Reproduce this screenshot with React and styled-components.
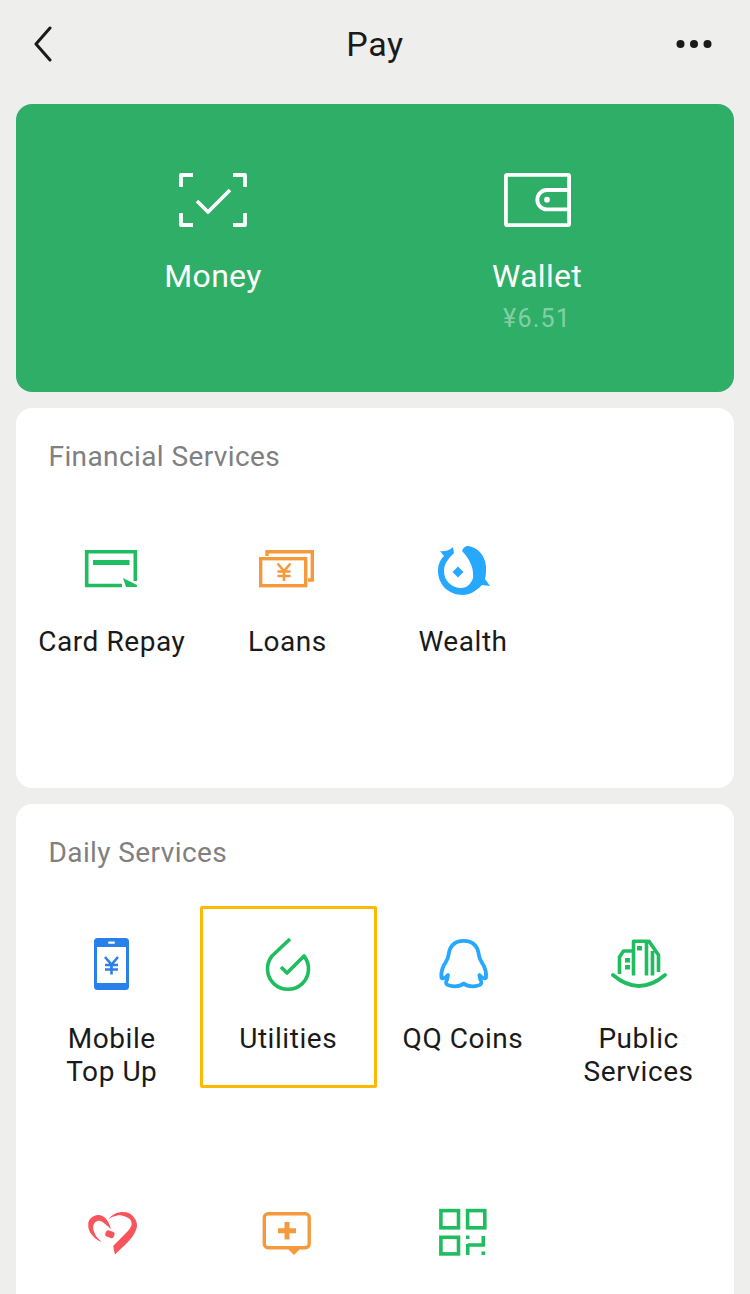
import React from "react";
import styled, { createGlobalStyle } from "styled-components";

const Global = createGlobalStyle`
  html, body { margin: 0; padding: 0; background: #eeeeed; }
  #root { width: 750px; height: 1294px; overflow: hidden; }
  * { box-sizing: border-box; }
`;

const Page = styled.div`
  width: 750px;
  height: 1294px;
  overflow: hidden;
  background: #eeeeed;
  font-family: "Roboto", "Liberation Sans", sans-serif;
  color: #1a1a1a;
`;
const Header = styled.header`
  height: 88px;
  display: grid;
  grid-template-columns: 1fr auto 1fr;
  align-items: center;
  padding: 0 33px;
`;
const HeaderSlot = styled.div`
  display: flex;
  justify-content: ${(p) => p.$end ? "flex-end" : "flex-start"};
  padding-right: ${(p) => p.$end ? "5px" : "0"};
`;
const Title = styled.h1`
  margin: 0;
  font-size: 34px;
  font-weight: 400;
  letter-spacing: 0.6px;
`;
const Content = styled.main`
  padding: 16px 16px 0;
  display: flex;
  flex-direction: column;
  gap: 16px;
`;
const Hero = styled.section`
  height: 288px;
  border-radius: 16px;
  background: #2fae67;
  padding: 68px 35px 0;
  display: grid;
  grid-template-columns: 324px 324px;
  align-items: start;
`;
const HeroItem = styled.div`
  display: flex;
  flex-direction: column;
  align-items: center;
  color: #fff;
`;
const HeroLabel = styled.div`
  margin-top: 30px;
  font-size: 32px;
  line-height: 36px;
  letter-spacing: 0.3px;
`;
const HeroSub = styled.div`
  margin-top: 10px;
  font-size: 25px;
  line-height: 30px;
  letter-spacing: 1.2px;
  color: rgba(255, 255, 255, 0.42);
`;
const Card = styled.section`
  border-radius: 16px;
  background: #fff;
  padding: 33px 8px 12px;
`;
const CardTitle = styled.h2`
  margin: 0 0 ${(p) => p.$gap}px 24.5px;
  font-size: 28px;
  line-height: 32px;
  font-weight: 400;
  color: #808080;
  letter-spacing: 0.4px;
`;
const Grid = styled.div`
  display: grid;
  grid-template-columns: repeat(4, 175.6px);
  grid-auto-rows: 267px;
`;
const Cell = styled.div`
  height: 182px;
  padding-top: 31px;
  display: flex;
  flex-direction: column;
  align-items: center;
  margin-right: ${(p) => p.$selected ? "-1.6px" : "0"};
  box-shadow: ${(p) => p.$selected ? "inset 0 0 0 3px #ffb900" : "none"};
  border-radius: 2px;
`;
const CellLabel = styled.div`
  margin-top: 29px;
  font-size: 28px;
  line-height: 33px;
  text-align: center;
  white-space: pre-line;
  letter-spacing: 0.55px;
`;
const Svg = styled.svg`
  display: block;
  flex: none;
`;

const Back = () => (
  <Svg width="20" height="36" viewBox="0 0 20 36" fill="none" stroke="#1a1a1a" strokeWidth="3" strokeLinecap="round" strokeLinejoin="round">
    <path d="M17 2 L3 18 L17 34" />
  </Svg>
);
const More = () => (
  <Svg width="36" height="10" viewBox="0 0 36 10" fill="#1a1a1a">
    <circle cx="4.5" cy="5" r="4" /><circle cx="18" cy="5" r="4" /><circle cx="31.5" cy="5" r="4" />
  </Svg>
);
const MoneyIcon = () => (
  <Svg width="70" height="56" viewBox="0 0 70 56" fill="none" stroke="#fff" strokeWidth="3.8" strokeLinejoin="round">
    <path d="M15 3 H3 V15 M55 3 H67 V15 M3 41 V53 H15 M67 41 V53 H55" />
    <path d="M19 29 L30 40 L52 18" strokeWidth="3.6" />
  </Svg>
);
const WalletIcon = () => (
  <Svg width="70" height="56" viewBox="0 0 70 56" fill="none" stroke="#fff" strokeWidth="3.8" strokeLinejoin="round">
    <rect x="3.9" y="2.9" width="63.2" height="50.2" rx="1" />
    <path d="M67 18 H45 A9.7 9.7 0 0 0 45 37.4 H67" />
    <circle cx="45" cy="27.7" r="2.9" fill="#fff" stroke="none" />
  </Svg>
);

const I = ({ children, fill = "none", stroke = "none", w = 3 }) => (
  <Svg width="56" height="56" viewBox="0 0 56 56" fill={fill} stroke={stroke} strokeWidth={w}>{children}</Svg>
);
const GREEN = "#1fbd5f", ORANGE = "#f59a3c", BLUE = "#26a8ff", DEEP = "#2a80ea", RED = "#f7555b";

const Yen = ({ x, y, color }) => (
  <g transform={`translate(${x} ${y})`} fill="none" stroke={color} strokeWidth="2.6">
    <path d="M-6.5 -8.5 L0 -1 L6.5 -8.5 M-6.5 -0.5 H6.5 M-6.5 4 H6.5 M0 -1 V9" />
  </g>
);

const CardIcon = () => (
  <I>
    <path d="M38 45.5 H2.7 V11.7 H51.3 V41" fill="none" stroke={GREEN} strokeWidth="3.6" />
    <rect x="9" y="20" width="36.5" height="5" fill={GREEN} />
    <path d="M39 38 L53 45 V47 H42 Z" fill={GREEN} />
  </I>
);
const LoansIcon = () => (
  <I stroke={ORANGE} w={3.4}>
    <path d="M8 16 V11.7 H53.3 V40 H49" />
    <rect x="1.7" y="18.7" width="45" height="27" />
    <Yen x={25} y={32} color={ORANGE} />
  </I>
);
const WealthIcon = () => (
  <I>
    <path fill={BLUE} d="M5 11 C9 12 14 11 18 7 L19 13 C13 19 9 24 9 31 C9 41 17 48 26 48 C32 48 36 44 38 38 C39 30 36 20 27 11 C28 8 30 6 33 6 C42 7 50 15 51 26 C51 32 51 36 50 39 L55 46 L47 45 C41 51 35 55 28 55 C13 55 3 44 3 31 C3 24 5 20 9 16 Z" />
    <path fill={BLUE} d="M23 26.5 L28.5 32 L23 37.5 L17.5 32 Z" />
  </I>
);
const MobileIcon = () => (
  <I>
    <rect x="10" y="1" width="35" height="52" rx="3.5" fill={DEEP} />
    <rect x="13" y="10" width="29" height="36" fill="#fff" />
    <rect x="24" y="4.4" width="7" height="2.4" rx="1.2" fill="#fff" />
    <Yen x={27.5} y={28.5} color={DEEP} />
  </I>
);
const UtilitiesIcon = () => (
  <I stroke={GREEN} w={3.6}>
    <path d="M30 2 L12 19 A20.5 20.5 0 1 0 44 19 L27 36 L21 30" strokeLinejoin="round" />
  </I>
);
const QQIcon = () => (
  <I stroke={BLUE} w={3.8}>
    <path strokeLinejoin="round" d="M28.7 3.8 C19 3.8 14.5 10 13.5 18 C13 23 10.5 25 8.5 29 C6.5 33 6 37 6.5 41 C8 42 11 40 13 38 L12 43 C10 45 11 48 14 48.5 C20 50 25 49.5 28.7 46.5 C32.4 49.5 37.4 50 43.4 48.5 C46.4 48 47.4 45 45.4 43 L44.4 38 C46.4 40 49.4 42 50.9 41 C51.4 37 50.9 33 48.9 29 C46.9 25 44.4 23 43.9 18 C42.9 10 38.4 3.8 28.7 3.8 Z" />
  </I>
);
const PublicIcon = () => (
  <I stroke={GREEN} w={3.6}>
    <path d="M2 38 Q28 60 54 38" strokeWidth="3.8" strokeLinecap="round" />
    <path d="M8.5 37 V20 L12.5 14 H22.5 M22.5 38.5 V4.2 H38 L47.5 18 V35 M35.5 4.2 V38.5 M41.5 14 V38.5" strokeLinejoin="round" />
    <rect x="14" y="21" width="5" height="4.5" fill={GREEN} stroke="none" />
    <rect x="14" y="28" width="5" height="4.5" fill={GREEN} stroke="none" />
    <rect x="26" y="9" width="5" height="4.5" fill={GREEN} stroke="none" />
  </I>
);
const HeartIcon = () => (
  <I>
    <path fill={RED} d="M24.3 15 C28 11 32 8.5 36 8.3 C42 7.5 47 9 50 13.5 C53 17 53.5 21 52.7 24 C51 30 47 35 42 40 C38 44 34 47 31 50.5 C30 47 29.5 44 29.3 41.7 C33 38 37 34 41 30 C45 26 47.5 23 47.7 20 C47.5 16 45 14 42.7 13.3 C38 11 34 11 32.7 11.7 C29 12 27 13.5 24.3 15 Z" />
    <path fill={RED} d="M26.7 25 C26.5 22 24 16 20 13 C18 11.5 16 11 14.3 11 C8 11.5 4 16 4.3 20 C4 24 5 26 6 28.3 C9 33 13 36 17.7 38.3 C15 35 12 33 11 30 C9.5 27 9 24 9.3 21.7 C10 19 12 17 14.3 16.7 C17 16.5 19 18 21 20 C23 21.5 25 23.5 26.7 25 Z" />
    <rect x="21.5" y="27" width="9" height="6.5" rx="2.5" fill={RED} transform="rotate(20 26 30)" />
  </I>
);
const ChatIcon = () => (
  <I>
    <path d="M9 9.8 H46.5 A3.7 3.7 0 0 1 50.2 13.5 V40 A3.7 3.7 0 0 1 46.5 43.7 H9 A3.7 3.7 0 0 1 5.3 40 V13.5 A3.7 3.7 0 0 1 9 9.8 Z" fill="none" stroke={ORANGE} strokeWidth="3.4" />
    <path d="M28 44 H42 L35 51 Z" fill={ORANGE} />
    <path d="M28 18 V35.5 M19 26.7 H37" stroke={ORANGE} strokeWidth="5" />
  </I>
);
const QrIcon = () => (
  <I stroke={GREEN} w={3.6}>
    <rect x="5.9" y="6.6" width="17.6" height="17.2" />
    <rect x="32.6" y="6.6" width="17.2" height="17.2" />
    <rect x="5.9" y="33.3" width="17.6" height="16.6" />
    <path d="M32.7 40 V51 M32.7 41 H48.3 V32 M48.3 47.5 V51 M32.7 31.5 V35" />
  </I>
);

const financial = [
  { icon: CardIcon, label: "Card Repay" },
  { icon: LoansIcon, label: "Loans" },
  { icon: WealthIcon, label: "Wealth" },
];
const daily = [
  { icon: MobileIcon, label: "Mobile\nTop Up" },
  { icon: UtilitiesIcon, label: "Utilities", selected: true },
  { icon: QQIcon, label: "QQ Coins" },
  { icon: PublicIcon, label: "Public\nServices" },
  { icon: HeartIcon },
  { icon: ChatIcon },
  { icon: QrIcon },
];

const Services = ({ title, items, gap }) => (
  <Card>
    <CardTitle $gap={gap}>{title}</CardTitle>
    <Grid>
      {items.map(({ icon: Icon, label, selected }, i) => (
        <Cell key={i} $selected={selected}>
          <Icon />
          {label && <CellLabel>{label}</CellLabel>}
        </Cell>
      ))}
    </Grid>
  </Card>
);

export default function App() {
  return (
    <Page>
      <Global />
      <Header>
        <HeaderSlot><Back /></HeaderSlot>
        <Title>Pay</Title>
        <HeaderSlot $end><More /></HeaderSlot>
      </Header>
      <Content>
        <Hero>
          <HeroItem>
            <MoneyIcon />
            <HeroLabel>Money</HeroLabel>
          </HeroItem>
          <HeroItem>
            <WalletIcon />
            <HeroLabel>Wallet</HeroLabel>
            <HeroSub>¥6.51</HeroSub>
          </HeroItem>
        </Hero>
        <Services title="Financial Services" items={financial} gap={36} />
        <Services title="Daily Services" items={daily} gap={37} />
      </Content>
    </Page>
  );
}
